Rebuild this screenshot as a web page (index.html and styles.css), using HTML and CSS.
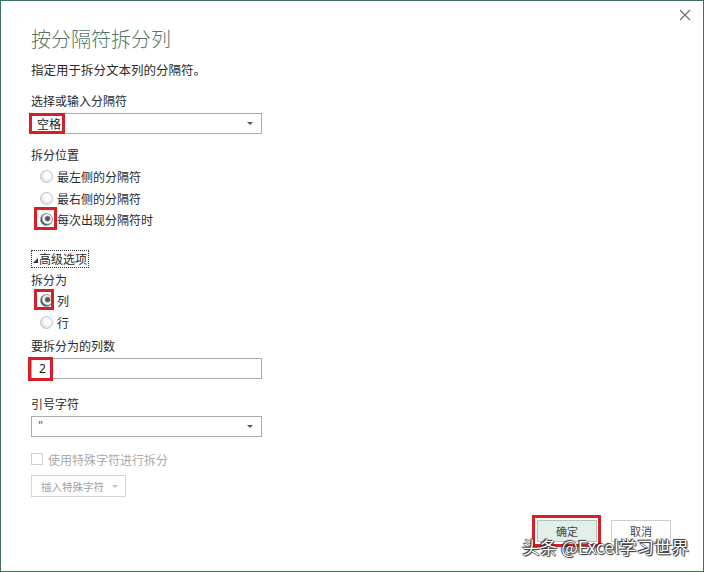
FILE: index.html
```html
<!DOCTYPE html>
<html lang="zh-CN">
<head>
<meta charset="utf-8">
<title>按分隔符拆分列</title>
<link rel="stylesheet" href="styles.css">
</head>
<body>
<div class="dialog">
  <div class="topbar">
    <svg class="close" width="12" height="12" viewBox="0 0 12 12"><path d="M1 1L11 11M11 1L1 11" stroke="#6a6a6a" stroke-width="1.1" fill="none"/></svg>
  </div>
  <h1 class="title">按分隔符拆分列</h1>
  <div class="subtitle">指定用于拆分文本列的分隔符。</div>

  <div class="label gap-13">选择或输入分隔符</div>
  <div class="select gap-3">
    <span class="value">空格</span>
    <span class="arrow"></span>
    <span class="hl hl-space"></span>
  </div>

  <div class="label gap-12">拆分位置</div>
  <div class="radios gap-2">
    <div class="radio-row"><span class="radio"></span><span>最左侧的分隔符</span></div>
    <div class="radio-row"><span class="radio"></span><span>最右侧的分隔符</span></div>
    <div class="radio-row"><span class="radio on"></span><span>每次出现分隔符时</span><span class="hl hl-each"></span></div>
  </div>

  <div class="adv gap-adv"><span class="tri"></span>高级选项</div>

  <div class="label gap-3">拆分为</div>
  <div class="radios gap-1">
    <div class="radio-row"><span class="radio on"></span><span>列</span><span class="hl hl-col"></span></div>
    <div class="radio-row"><span class="radio"></span><span>行</span></div>
  </div>

  <div class="label gap-4">要拆分为的列数</div>
  <div class="select gap-3">
    <span class="value num">2</span>
    <span class="hl hl-num"></span>
  </div>

  <div class="label gap-16">引号字符</div>
  <div class="select gap-3">
    <span class="value quote">"</span>
    <span class="arrow"></span>
  </div>

  <div class="check-row gap-13"><span class="checkbox"></span><span>使用特殊字符进行拆分</span></div>
  <div class="insert-btn gap-7"><span>插入特殊字符</span><span class="arrow light"></span></div>

  <div class="spacer"></div>
  <div class="footer">
    <div class="btn primary"><span class="btn-text">确定</span><span class="hl hl-ok"></span></div>
    <div class="btn"><span class="btn-text">取消</span></div>
  </div>

  <div class="watermark">头条 @Excel学习世界</div>
</div>
</body>
</html>
```
FILE: styles.css
```css
html, body {
  margin: 0;
  padding: 0;
  background: #fff;
}
body {
  font-family: "Noto Sans CJK SC", "Microsoft YaHei", sans-serif;
  color: #2b2b2b;
}
.dialog {
  position: relative;
  width: 704px;
  height: 572px;
  box-sizing: border-box;
  border: 1px solid #3f6f56;
  padding-left: 30px;
  display: flex;
  flex-direction: column;
  overflow: hidden;
}
.topbar {
  height: 26px;
  box-sizing: border-box;
  padding: 8px 12px 0 0;
  display: flex;
  justify-content: flex-end;
  flex-shrink: 0;
}
.close { display: block; }
.title {
  margin: 0;
  font-size: 20px;
  line-height: 24px;
  font-weight: 300;
  color: #527766;
}
.subtitle {
  margin-top: 10px;
  font-size: 12.5px;
  line-height: 18px;
  color: #2b2b2b;
}
.label {
  font-size: 12px;
  line-height: 18px;
  color: #2b2b2b;
}
.gap-1 { margin-top: 1px; }
.gap-2 { margin-top: 2px; }
.gap-3 { margin-top: 3px; }
.gap-4 { margin-top: 4px; }
.gap-7 { margin-top: 7px; }
.gap-12 { margin-top: 12px; }
.gap-13 { margin-top: 13px; }
.gap-16 { margin-top: 16px; }
.gap-adv { margin-top: 19.5px; }

.select {
  position: relative;
  width: 231px;
  height: 21px;
  box-sizing: border-box;
  border: 1px solid #ababab;
  display: flex;
  align-items: center;
  justify-content: space-between;
  padding: 0 8px 0 5px;
  flex-shrink: 0;
}
.value {
  font-size: 12px;
  line-height: 19px;
  color: #222;
}
.value.num { padding-left: 2px; font-family: "Noto Sans", sans-serif; font-size: 12px; }
.value.quote { padding-left: 1px; font-size: 11px; color: #555; }
.arrow {
  width: 0;
  height: 0;
  border-left: 3px solid transparent;
  border-right: 3px solid transparent;
  border-top: 3px solid #555;
}
.arrow.light { border-top-color: #c4c4c4; }

.hl {
  position: absolute;
  box-sizing: border-box;
  border: 3px solid #d81e27;
  pointer-events: none;
}
.hl-space { left: -3px; top: -1px; width: 36px; height: 21px; }
.hl-each { left: 3px; top: -2px; width: 23px; height: 23px; }
.hl-col { left: 3px; top: -1px; width: 20px; height: 21px; }
.hl-num { left: -4px; top: -2px; width: 25px; height: 24px; }
.hl-ok { left: -6px; top: -6px; width: 69px; height: 32px; }

.radios { display: flex; flex-direction: column; }
.radio-row {
  position: relative;
  height: 21.5px;
  display: flex;
  align-items: center;
  padding-left: 9px;
  gap: 4px;
  font-size: 12px;
  color: #2b2b2b;
}
.radio {
  width: 13px;
  height: 13px;
  box-sizing: border-box;
  border-radius: 50%;
  border: 1px solid #c2c2c2;
  background: radial-gradient(circle at 62% 38%, #ffffff 0, #fafafa 40%, #dcdcdc 75%, #b9b9b9 100%);
  flex-shrink: 0;
}
.radio.on {
  border-color: #8a9099;
  background: radial-gradient(circle at 60% 42%, #4a4a4a 0, #6b6b6b 2.2px, #e8e8e8 3.2px, #ffffff 4.2px, #c7cbd0 5px, #2c3e52 6.5px);
}

.adv {
  align-self: flex-start;
  height: 18px;
  box-sizing: border-box;
  border: 1px dotted #333;
  display: flex;
  align-items: center;
  padding: 0 1px 0 1px;
  font-size: 12px;
  line-height: 16px;
  color: #2b2b2b;
}
.tri {
  width: 0;
  height: 0;
  border-left: 5px solid transparent;
  border-bottom: 5px solid #333;
  margin: 3px 1px 0 0;
}

.check-row {
  height: 18px;
  display: flex;
  align-items: center;
  gap: 5px;
  font-size: 12px;
  color: #a9a9a9;
}
.checkbox {
  width: 12px;
  height: 12px;
  box-sizing: border-box;
  border: 1px solid #cfcfcf;
  background: #fff;
}
.insert-btn {
  width: 95px;
  height: 22px;
  box-sizing: border-box;
  border: 1px solid #d4d4d4;
  display: flex;
  align-items: center;
  padding-left: 9px;
  gap: 8px;
  font-size: 10.5px;
  color: #a0a0a0;
  flex-shrink: 0;
}

.spacer { flex: 1; }
.footer {
  display: flex;
  justify-content: flex-end;
  gap: 14px;
  padding: 0 32px 29px 0;
  flex-shrink: 0;
}
.btn {
  position: relative;
  width: 60px;
  height: 22px;
  box-sizing: border-box;
  border: 1px solid #cdcdcd;
  background: #fff;
  display: flex;
  align-items: center;
  justify-content: center;
  font-size: 11px;
  color: #444;
}
.btn-text { line-height: 12px; }
.btn.primary {
  background: #e2efe8;
  border-color: #a9c9b8;
}

.watermark {
  position: absolute;
  right: 14px;
  bottom: 16px;
  font-size: 17.5px;
  line-height: 16px;
  color: #fff;
  text-shadow: 0 0 1px #222, 0 0 1px #222, 1px 1px 1px #333, -1px -1px 1px #333;
  white-space: nowrap;
}
```
